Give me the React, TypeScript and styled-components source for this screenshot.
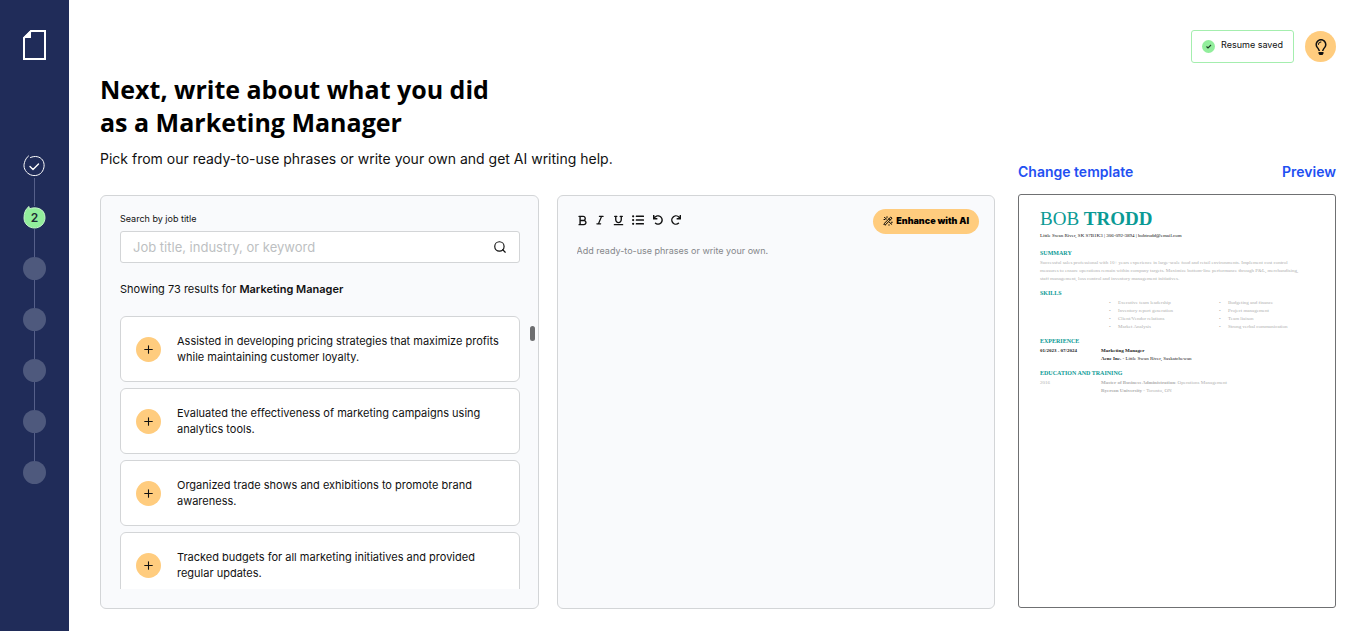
import React from 'react';
import styled, { createGlobalStyle } from 'styled-components';
import { FaListUl, FaUndo, FaRedo, FaRegLightbulb } from 'react-icons/fa';
import { FaBold, FaItalic, FaUnderline } from 'react-icons/fa6';
import { Search, Plus } from 'lucide-react';

const sans = `Inter, 'Liberation Sans', sans-serif`;
const display = `'Open Sans', Inter, sans-serif`;
const serif = `'Liberation Serif', serif`;

const GlobalStyle = createGlobalStyle`
  *, *::before, *::after { box-sizing: border-box; }
  body { margin: 0; background: #fff; color: #111; font-family: ${sans}; }
  h1, h2, h3, p, ul, ol { margin: 0; padding: 0; }
  ul, ol { list-style: none; }
  button { font: inherit; color: inherit; border: 0; padding: 0; background: none; cursor: pointer; }
`;

const Page = styled.div`
  display: grid;
  grid-template-columns: 69px minmax(0, 1fr);
  min-height: 100vh;
`;

const Sidebar = styled.nav`
  display: flex;
  flex-direction: column;
  align-items: center;
  gap: 95px;
  padding: 30px 0;
  background: #202c59;
`;

const Logo = styled.a`
  display: block;
  height: 30px;
  svg { display: block; }
`;

const Steps = styled.ol`
  display: flex;
  flex-direction: column;
  align-items: center;
`;

const Step = styled.li`
  display: flex;
  flex-direction: column;
  align-items: center;

  & + &::before {
    content: '';
    width: 1px;
    height: 28px;
    background: #56608a;
  }
`;

const StepDot = styled.button`
  display: block;
  width: 23px;
  height: 23px;
  border-radius: 50%;
  background: #4e597d;
`;

const StepMark = styled.button`
  display: grid;
  place-items: center;
  width: 23px;
  height: 23px;
  font-size: 12px;
  font-weight: 600;
  line-height: 23px;
  color: #1c2b33;

  > * { grid-area: 1 / 1; }
`;

const StepNumber = styled.span`
  z-index: 1;
`;

const Main = styled.main`
  display: flex;
  flex-direction: column;
  gap: 10px;
  padding: 30px 30px 22px 31px;
`;

const TopBar = styled.header`
  display: flex;
  justify-content: flex-end;
  align-items: center;
  gap: 11px;
`;

const SavedBadge = styled.div`
  display: flex;
  align-items: center;
  gap: 6px;
  height: 33px;
  padding: 0 10px;
  border: 1px solid #a4eeae;
  border-radius: 3px;
  font-size: 9px;
  line-height: 12px;
  span { padding-bottom: 3px; }
`;

const TipButton = styled.button`
  display: grid;
  place-items: center;
  width: 31px;
  height: 31px;
  border-radius: 50%;
  background: #ffcc7e;
`;

const Columns = styled.div`
  flex: 1;
  display: grid;
  grid-template-columns: minmax(0, 1fr) 318px;
  gap: 23px;
`;

const Work = styled.section`
  display: flex;
  flex-direction: column;
`;

const Title = styled.h1`
  font-family: ${display};
  font-size: 25px;
  font-weight: 700;
  line-height: 33px;
  color: #000;
`;

const Lead = styled.p`
  margin: 10px 0 26px;
  font-size: 14px;
  line-height: 20px;
`;

const Panels = styled.div`
  flex: 1;
  display: grid;
  grid-template-columns: repeat(2, minmax(0, 1fr));
  gap: 18px;
`;

const Panel = styled.section`
  display: flex;
  flex-direction: column;
  min-height: 414px;
  padding: 13px 18px 19px 19px;
  border: 1px solid #d3d5d7;
  border-radius: 6px;
  background: #f9fafc;
`;

const FieldLabel = styled.label`
  margin: 2px 0 5px;
  font-size: 9px;
  line-height: 15px;
`;

const SearchBox = styled.div`
  display: flex;
  align-items: center;
  height: 32px;
  padding: 0 12px;
  border: 1px solid #d3d5d7;
  border-radius: 3px;
  background: #fff;
`;

const SearchInput = styled.input`
  flex: 1;
  min-width: 0;
  border: 0;
  outline: 0;
  padding: 0;
  background: none;
  font: 13px/20px ${sans};
  color: #111;
  &::placeholder { color: #bdbfc2; opacity: 1; }
`;

const IconButton = styled.button`
  display: grid;
  place-items: center;
`;

const ResultCount = styled.p`
  margin: 17px 0 18px;
  font-size: 11px;
  line-height: 18px;
  strong { font-weight: 600; }
`;

const ListArea = styled.div`
  flex: 1 1 0;
  min-height: 0;
  display: grid;
  grid-template-columns: minmax(0, 1fr) 5px;
  gap: 10px;
  margin-right: -15px;
  overflow: hidden;
`;

const PhraseList = styled.ul`
  display: flex;
  flex-direction: column;
  gap: 6px;
  height: 0;
  min-height: 100%;
  overflow: hidden;
`;

const PhraseCard = styled.li`
  flex: none;
  display: flex;
  align-items: center;
  gap: 16px;
  height: 66px;
  padding: 0 15px;
  border: 1px solid #d3d5d7;
  border-radius: 6px;
  background: #fff;
  font-size: 11px;
  line-height: 16px;
`;

const AddButton = styled.button`
  flex: none;
  display: grid;
  place-items: center;
  width: 25px;
  height: 25px;
  border-radius: 50%;
  background: #ffcc7e;
`;

const ScrollThumb = styled.div`
  height: 15px;
  margin-top: 10px;
  border-radius: 3px;
  background: #6d6e70;
`;

const EditorBar = styled.div`
  display: flex;
  justify-content: space-between;
  align-items: flex-start;
  margin-right: -3px;
`;

const Tools = styled.div`
  display: flex;
  align-items: center;
  gap: 7px;
  height: 22px;
`;

const Tool = styled(IconButton)<{ $wide?: boolean }>`
  width: ${(p) => (p.$wide ? 15 : 11)}px;
  height: 16px;
`;

const EnhanceButton = styled.button`
  display: flex;
  align-items: center;
  gap: 3px;
  height: 25px;
  padding: 0 10px 2px;
  border-radius: 13px;
  background: #ffcc7e;
  font-size: 9px;
  font-weight: 900;
  color: #000;
`;

const Draft = styled.textarea`
  flex: 1;
  margin-top: 9px;
  padding: 0;
  border: 0;
  outline: 0;
  resize: none;
  background: none;
  font: 9px/15px ${sans};
  &::placeholder { color: #85878a; opacity: 1; }
`;

const Aside = styled.aside`
  display: flex;
  flex-direction: column;
  gap: 12px;
  padding: 89px 0 1px;
`;

const AsideLinks = styled.div`
  display: flex;
  justify-content: space-between;
  font-size: 14px;
  font-weight: 600;
  line-height: 20px;
  a { color: #1f50f2; text-decoration: none; }
`;

const Resume = styled.article`
  flex: 1;
  padding: 12px 21px;
  border: 1px solid #6f7072;
  border-radius: 3px;
  font-family: ${serif};
  font-size: 5px;
  line-height: 8px;
  color: #b0b0b0;
`;

const ResumeName = styled.h2`
  font-size: 19px;
  font-weight: 400;
  line-height: 24px;
  color: #0b9a95;
`;

const Contact = styled.p`
  margin: 1px 0 9px;
  line-height: 8px;
  color: #111;
`;

const ResumeHeading = styled.h3`
  font-size: 6px;
  font-weight: 700;
  line-height: 8px;
  margin-bottom: 2px;
  color: #0b9a95;
`;

const Block = styled.section`
  margin-bottom: 6px;
`;

const Skills = styled.div`
  display: grid;
  grid-template-columns: 110px 1fr;
  padding-left: 69px;
`;

const SkillList = styled.ul`
  li { display: flex; }
  li::before { content: '•'; width: 9px; }
`;

const Entry = styled.div<{ $dark?: boolean }>`
  display: grid;
  grid-template-columns: 61px 1fr;
  line-height: 8px;
  color: ${(p) => (p.$dark ? '#222' : '#b0b0b0')};
`;

const phrases = [
  ['Assisted in developing pricing strategies that maximize profits', 'while maintaining customer loyalty.'],
  ['Evaluated the effectiveness of marketing campaigns using', 'analytics tools.'],
  ['Organized trade shows and exhibitions to promote brand', 'awareness.'],
  ['Tracked budgets for all marketing initiatives and provided', 'regular updates.'],
];

const tools = [
  { label: 'Bold', Icon: FaBold, size: 11 },
  { label: 'Italic', Icon: FaItalic, size: 10 },
  { label: 'Underline', Icon: FaUnderline, size: 11 },
  { label: 'Bulleted list', Icon: FaListUl, size: 12, wide: true },
  { label: 'Undo', Icon: FaUndo, size: 10 },
  { label: 'Redo', Icon: FaRedo, size: 10 },
];

const skillColumns = [
  ['Executive team leadership', 'Inventory report generation', 'Client/Vendor relations', 'Market Analysis'],
  ['Budgeting and finance', 'Project management', 'Team liaison', 'Strong verbal communication'],
];

function WandIcon() {
  return (
    <svg width="10" height="10" viewBox="0 0 20 20" fill="none" stroke="#000" strokeWidth="2" strokeLinecap="round" strokeLinejoin="round">
      <path d="M2 15.500 15.500 2 18 4.500 4.500 18Z M12 5.500 14.500 8" />
      <path d="M3 3l4 3 M2 7h2 M8 1.500v1.500 M13 13l4.500 3.500 M17 12.500h1.500 M12 17.500v1" />
    </svg>
  );
}

export default function App() {
  return (
    <>
      <GlobalStyle />
      <Page>
        <Sidebar aria-label="Progress">
          <Logo href="#" aria-label="Home">
            <svg width="23" height="30" viewBox="0 0 23 30">
              <path d="M8 1H22V29H1V8Z" fill="none" stroke="#fff" strokeWidth="2" />
              <path d="M8 0V8H0Z" fill="#fff" />
            </svg>
          </Logo>
          <Steps>
            <Step>
              <StepMark aria-label="Step 1, done">
                <svg width="23" height="23" viewBox="0 0 23 23" fill="none" stroke="#fff" strokeLinecap="round" strokeLinejoin="round">
                  <path d="M7.500 2.500C12 .5 17 1.500 19.500 5 22 8.500 21.500 14 18.500 17.500 15.500 21 10 21.500 6 19 2 16.500 0 12 1.500 7.500 2.200 5 3.500 2.500 5.500 1" strokeWidth="1" />
                  <path d="M7 11.500l3 3 5.500-5.500" strokeWidth="1.400" />
                </svg>
              </StepMark>
            </Step>
            <Step>
              <StepMark aria-label="Step 2" aria-current="step">
                <svg width="23" height="23" viewBox="0 0 23 23">
                  <path d="M6 .5 6.300 3C12 .3 22 2 22 11.500 22 18 17 22 11.500 22S1 18 1 12C1 7 2.500 3 6 .5Z" fill="#92ee9c" stroke="#c6f7cb" strokeWidth="1" />
                </svg>
                <StepNumber>2</StepNumber>
              </StepMark>
            </Step>
            {[3, 4, 5, 6, 7].map((n) => (
              <Step key={n}>
                <StepDot aria-label={`Step ${n}`} />
              </Step>
            ))}
          </Steps>
        </Sidebar>

        <Main>
          <TopBar>
            <SavedBadge role="status">
              <svg width="13" height="13" viewBox="0 0 13 13">
                <circle cx="6.500" cy="6.500" r="6.500" fill="#92ee9c" />
                <path d="M4.500 6.500l1.500 1.500 3-3" fill="none" stroke="#1b3b25" strokeWidth="1.100" />
              </svg>
              <span>Resume saved</span>
            </SavedBadge>
            <TipButton aria-label="Tips">
              <FaRegLightbulb size={16} color="#111" />
            </TipButton>
          </TopBar>

          <Columns>
            <Work>
              <Title>
                Next, write about what you did
                <br />
                as a Marketing Manager
              </Title>
              <Lead>Pick from our ready-to-use phrases or write your own and get AI writing help.</Lead>

              <Panels>
                <Panel>
                  <FieldLabel htmlFor="job-search">Search by job title</FieldLabel>
                  <SearchBox>
                    <SearchInput id="job-search" placeholder="Job title, industry, or keyword" />
                    <IconButton aria-label="Search">
                      <Search size={14} strokeWidth={2} />
                    </IconButton>
                  </SearchBox>
                  <ResultCount>
                    Showing 73 results for <strong>Marketing Manager</strong>
                  </ResultCount>
                  <ListArea>
                    <PhraseList>
                      {phrases.map(([first, second]) => (
                        <PhraseCard key={first}>
                          <AddButton aria-label="Add phrase">
                            <Plus size={13} strokeWidth={2} />
                          </AddButton>
                          <p>
                            {first}
                            <br />
                            {second}
                          </p>
                        </PhraseCard>
                      ))}
                    </PhraseList>
                    <ScrollThumb />
                  </ListArea>
                </Panel>

                <Panel>
                  <EditorBar>
                    <Tools>
                      {tools.map(({ label, Icon, size, wide }) => (
                        <Tool key={label} aria-label={label} $wide={wide}>
                          <Icon size={size} />
                        </Tool>
                      ))}
                    </Tools>
                    <EnhanceButton>
                      <WandIcon />
                      Enhance with AI
                    </EnhanceButton>
                  </EditorBar>
                  <Draft aria-label="Job description" placeholder="Add ready-to-use phrases or write your own." />
                </Panel>
              </Panels>
            </Work>

            <Aside>
              <AsideLinks>
                <a href="#template">Change template</a>
                <a href="#preview">Preview</a>
              </AsideLinks>
              <Resume>
                <ResumeName>
                  BOB <b>TRODD</b>
                </ResumeName>
                <Contact>Little Swan River, SK S7B1K3 | 306-092-3894 | bobtrodd@email.com</Contact>
                <Block>
                  <ResumeHeading>SUMMARY</ResumeHeading>
                  <p>
                    Successful sales professional with 10+ years experience in large-scale food and retail environments. Implement cost control
                    <br />
                    measures to ensure operations remain within company targets. Maximize bottom-line performance through P&amp;L, merchandising,
                    <br />
                    staff management, loss control and inventory management initiatives.
                  </p>
                </Block>
                <Block>
                  <ResumeHeading>SKILLS</ResumeHeading>
                  <Skills>
                    {skillColumns.map((column) => (
                      <SkillList key={column[0]}>
                        {column.map((skill) => (
                          <li key={skill}>{skill}</li>
                        ))}
                      </SkillList>
                    ))}
                  </Skills>
                </Block>
                <Block>
                  <ResumeHeading>EXPERIENCE</ResumeHeading>
                  <Entry $dark>
                    <b>01/2023 - 07/2024</b>
                    <p>
                      <b>Marketing Manager</b>
                      <br />
                      <b>Acne Inc.</b> - Little Swan River, Saskatchewan
                    </p>
                  </Entry>
                </Block>
                <Block>
                  <ResumeHeading>EDUCATION AND TRAINING</ResumeHeading>
                  <Entry>
                    <span>2016</span>
                    <p>
                      <b>Master of Business Administration</b>: Operations Management
                      <br />
                      <b>Ryerson University</b> - Toronto, ON
                    </p>
                  </Entry>
                </Block>
              </Resume>
            </Aside>
          </Columns>
        </Main>
      </Page>
    </>
  );
}
